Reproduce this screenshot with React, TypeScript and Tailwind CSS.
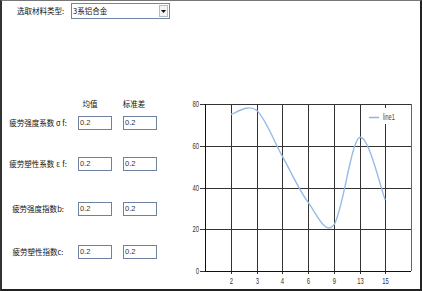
import React from "react";

const data = [75, 77, 55, 33, 22, 64, 34];
const xLabels = ["2", "3", "4", "6", "9", "13", "15"];

function Chart() {
  const L = 25;
  const R = 231;
  const T = 12;
  const B = 179;
  const xs = (i: number) => L + ((i + 1) * (R - L)) / 8;
  const ys = (v: number) => B - (v * (B - T)) / 80;
  const pts = data.map((v, i) => [xs(i), ys(v)]);
  let d = `M${pts[0][0].toFixed(2)},${pts[0][1].toFixed(2)}`;
  for (let i = 0; i < pts.length - 1; i++) {
    const p0 = pts[i - 1] ?? pts[i];
    const p1 = pts[i];
    const p2 = pts[i + 1];
    const p3 = pts[i + 2] ?? pts[i + 1];
    const c1 = [p1[0] + (p2[0] - p0[0]) / 6, p1[1] + (p2[1] - p0[1]) / 6];
    const c2 = [p2[0] - (p3[0] - p1[0]) / 6, p2[1] - (p3[1] - p1[1]) / 6];
    d += ` C${c1[0].toFixed(2)},${c1[1].toFixed(2)} ${c2[0].toFixed(2)},${c2[1].toFixed(2)} ${p2[0].toFixed(2)},${p2[1].toFixed(2)}`;
  }
  const cx = (x: number) => Math.round(x) + 0.5;
  const yVals = [0, 20, 40, 60, 80];
  return (
    <svg width={240} height={197} viewBox="0 0 240 197" className="block shrink-0">
      {data.map((_, i) => (
        <line key={"v" + i} x1={cx(xs(i))} y1={T} x2={cx(xs(i))} y2={B + 3} stroke="#333" strokeWidth={1} />
      ))}
      <line x1={cx(R)} y1={T} x2={cx(R)} y2={B} stroke="#666" strokeWidth={1} />
      {yVals.map((v) => (
        <line key={"h" + v} x1={L - 5} y1={cx(ys(v))} x2={R} y2={cx(ys(v))} stroke="#333" strokeWidth={1} />
      ))}
      <line x1={cx(L)} y1={T} x2={cx(L)} y2={B} stroke="#111" strokeWidth={1} />
      <line x1={L} y1={cx(B)} x2={R} y2={cx(B)} stroke="#111" strokeWidth={1} />
      {yVals.map((v) => (
        <text
          key={"yl" + v}
          transform={`translate(19 ${ys(v) + 3.2}) scale(0.62 1)`}
          textAnchor="end"
          fontSize={9.5}
          fill="#333"
          fontFamily="'Liberation Sans', Arial, sans-serif"
        >
          {v}
        </text>
      ))}
      {xLabels.map((t, i) => (
        <text
          key={"xl" + i}
          transform={`translate(${cx(xs(i))} ${B + 12.5}) scale(0.62 1)`}
          textAnchor="middle"
          fontSize={9.5}
          fill="#333"
          fontFamily="'Liberation Sans', Arial, sans-serif"
        >
          {t}
        </text>
      ))}
      <rect x={183} y={16} width={38} height={16} fill="#fff" />
      <line x1={189} y1={25.5} x2={199} y2={25.5} stroke="#8fb5e3" strokeWidth={1.5} />
      <text
        transform="translate(203 28) scale(0.62 1)"
        fontSize={9}
        fill="#444"
        fontFamily="'Liberation Sans', Arial, sans-serif"
      >
        line1
      </text>
      <path d={d} fill="none" stroke="#96bbe6" strokeWidth={1.4} />
    </svg>
  );
}

function Box() {
  return (
    <div className="w-[34px] h-[14px] border border-[#6f80a0] bg-white flex items-center pl-[1px] text-[7.5px] leading-none text-[#333] font-['Liberation_Sans',Arial,sans-serif]">
      0.2
    </div>
  );
}

function Row({ label, greek, tail, mt }: { label: string; greek?: string; tail: string; mt: string }) {
  return (
    <div className={`flex items-center h-[14px] ${mt}`}>
      <div className="w-[72px] text-center text-[7.5px] leading-none whitespace-nowrap text-[#111]">
        {label}
        {greek ? <span className="inline-block w-[8px] text-center">{greek}</span> : null}
        {tail}
      </div>
      <div className="ml-[4px]">
        <Box />
      </div>
      <div className="ml-[11px]">
        <Box />
      </div>
    </div>
  );
}

export default function App() {
  return (
    <div className="w-[422px] h-[291px] bg-white border-t border-t-[#777] border-l-2 border-l-[#333] border-r-2 border-r-[#222] border-b-2 border-b-[#222] flex flex-col font-['Noto_Sans_CJK_SC','Noto_Sans',sans-serif] overflow-hidden">
      <div className="flex items-center h-[16px] mt-[2px]">
        <div className="ml-[15px] w-[54px] text-[7.5px] leading-none text-[#111] whitespace-nowrap">选取材料类型:</div>
        <div className="w-[99px] h-[16px] border border-[#7186a6] bg-white flex items-center">
          <div className="flex-1 pl-[1px] text-[7.5px] leading-none text-[#111] whitespace-nowrap">3系铝合金</div>
          <div className="w-[9px] h-[12px] mr-[1px] border border-[#b5bcc8] bg-[#f4f4f4] flex items-center justify-center">
            <svg width="5" height="3" viewBox="0 0 5 3">
              <path d="M0 0 L5 0 L2.5 3 Z" fill="#111" />
            </svg>
          </div>
        </div>
      </div>
      <div className="flex">
        <div className="w-[178px] flex flex-col">
          <div className="flex mt-[81px] h-[8px] items-center text-[7.5px] leading-none text-[#111]">
            <div className="w-[74px]" />
            <div className="w-[28px] text-center">均值</div>
            <div className="w-[16px]" />
            <div className="w-[28px] text-center">标准差</div>
          </div>
          <Row label="疲劳强度系数" greek="σ" tail="f:" mt="mt-[8px]" />
          <Row label="疲劳塑性系数" greek="ε" tail="f:" mt="mt-[27px]" />
          <Row label="疲劳强度指数" tail="b:" mt="mt-[31px]" />
          <Row label="疲劳塑性指数" tail="c:" mt="mt-[29px]" />
        </div>
        <div className="mt-[73px]">
          <Chart />
        </div>
      </div>
    </div>
  );
}
